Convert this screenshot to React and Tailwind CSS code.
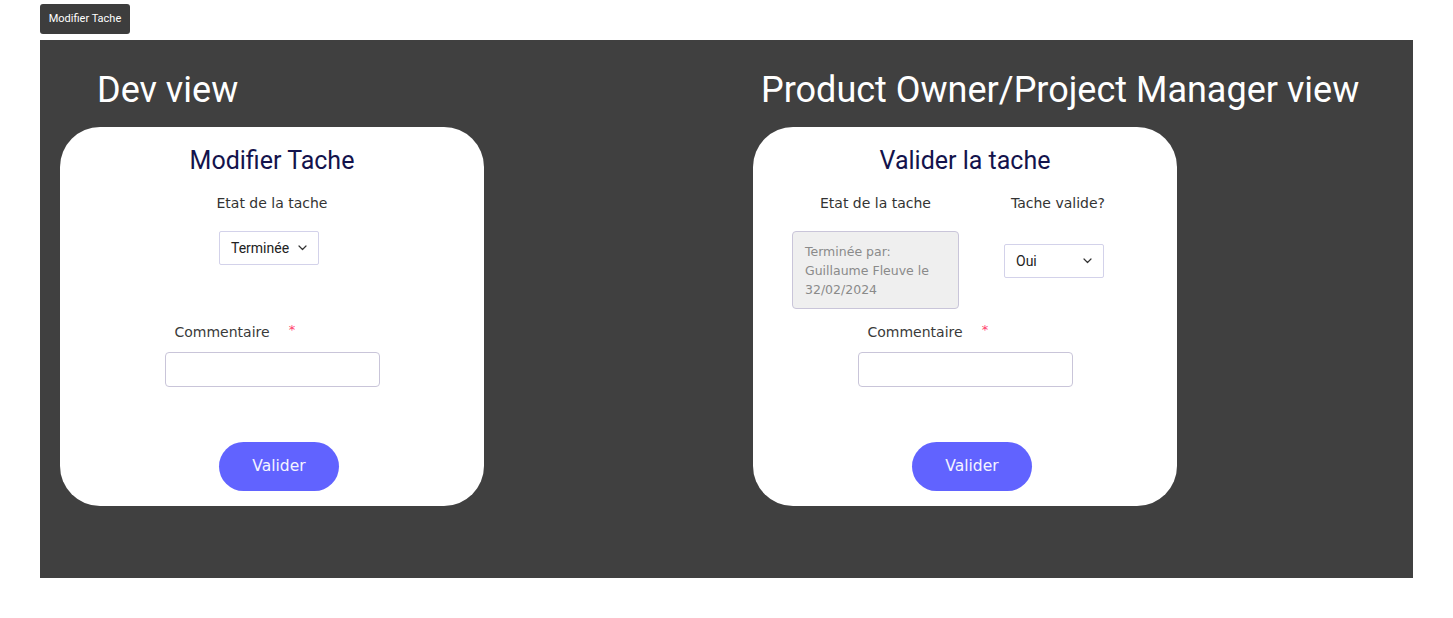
import { useState } from 'react';

const poppins = { fontFamily: '"DejaVu Sans", "Open Sans", sans-serif' };

function Chevron() {
  return (
    <svg width="9" height="6" viewBox="0 0 9 6" fill="none" className="shrink-0">
      <path d="M1 1l3.5 3.5L8 1" stroke="#333" strokeWidth="1.2" strokeLinecap="round" strokeLinejoin="round" />
    </svg>
  );
}

function Select({ value, className = '' }) {
  return (
    <div
      className={`w-[100px] h-[34px] px-[11px] flex items-center justify-between bg-white border border-[#d3d2ea] rounded-[2px] text-[14px] text-[#222] font-['Roboto',sans-serif] ${className}`}
    >
      <span>{value}</span>
      <Chevron />
    </div>
  );
}

function Comment({ mt }) {
  const [text, setText] = useState('');
  return (
    <div className={`flex flex-col items-center ${mt}`}>
      <div className="w-[215px] pl-[10px] flex items-center gap-[19px] h-5 text-[14px] text-[#3a3a3a]" style={poppins}>
        <span>Commentaire</span>
        <span className="text-[#ff3f6c] text-[13px] -mt-1">*</span>
      </div>
      <input
        value={text}
        onChange={(e) => setText(e.target.value)}
        className="mt-[10px] w-[215px] h-[35px] border border-[#c9c5d9] rounded-[4px] bg-white px-2 text-sm outline-none"
      />
    </div>
  );
}

function SubmitButton() {
  return (
    <button
      className="mt-[55px] ml-[159px] w-[120px] h-[49px] rounded-full bg-[#6163ff] text-[#f4f4ff] text-[15.5px]"
      style={poppins}
    >
      Valider
    </button>
  );
}

function Card({ title, children }) {
  return (
    <div className="w-[424px] h-[379px] bg-white rounded-[40px] pt-[18px] flex flex-col items-start">
      <h2 className="self-stretch text-center text-[25px] leading-[32px] text-[#13134c] font-['Roboto',sans-serif]">{title}</h2>
      {children}
    </div>
  );
}

export default function App() {
  return (
    <div className="min-h-screen bg-white pl-[40px] pt-[4px] font-['Roboto',sans-serif]">
      <button className="w-[90px] h-[30px] rounded-[3px] bg-[#3d3d3d] text-white text-[11px]">Modifier Tache</button>

      <div className="mt-[6px] w-[1373px] h-[538px] bg-[#404040] pl-[20px] pt-[29px] flex gap-[269px]">
        {/* Dev view */}
        <div className="flex flex-col">
          <h1 className="pl-[37px] text-[36px] leading-[42px] text-white">Dev view</h1>
          <div className="mt-[16px]">
            <Card title="Modifier Tache">
              <p className="self-stretch mt-[16px] text-center text-[14px] leading-5 text-[#333]" style={poppins}>
                Etat de la tache
              </p>
              <Select value="Terminée" className="mt-[18px] ml-[159px]" />
              <div className="self-stretch">
                <Comment mt="mt-[57px]" />
              </div>
              <SubmitButton />
            </Card>
          </div>
        </div>

        {/* PO / PM view */}
        <div className="flex flex-col">
          <h1 className="pl-[8px] text-[36px] leading-[42px] text-white whitespace-nowrap">
            Product Owner/Project Manager view
          </h1>
          <div className="mt-[16px]">
            <Card title="Valider la tache">
              <div className="mt-[16px] pl-[39px] flex gap-[45px]">
                <div className="w-[167px] flex flex-col items-center">
                  <p className="text-[14px] leading-5 text-[#333] whitespace-nowrap" style={poppins}>
                    Etat de la tache
                  </p>
                  <div
                    className="mt-[18px] w-[167px] h-[78px] bg-[#efefef] border border-[#c9c5d9] rounded-[4px] pl-[12px] pt-[10px] text-[12.5px] leading-[19px] text-[#8a8a8a]"
                    style={poppins}
                  >
                    Terminée par:
                    <br />
                    Guillaume Fleuve le
                    <br />
                    32/02/2024
                  </div>
                </div>
                <div className="w-[100px] flex flex-col items-center">
                  <p className="text-[14px] leading-5 text-[#333] whitespace-nowrap ml-2" style={poppins}>
                    Tache valide?
                  </p>
                  <Select value="Oui" className="mt-[31px]" />
                </div>
              </div>
              <div className="self-stretch">
                <Comment mt="mt-[13px]" />
              </div>
              <SubmitButton />
            </Card>
          </div>
        </div>
      </div>
    </div>
  );
}
